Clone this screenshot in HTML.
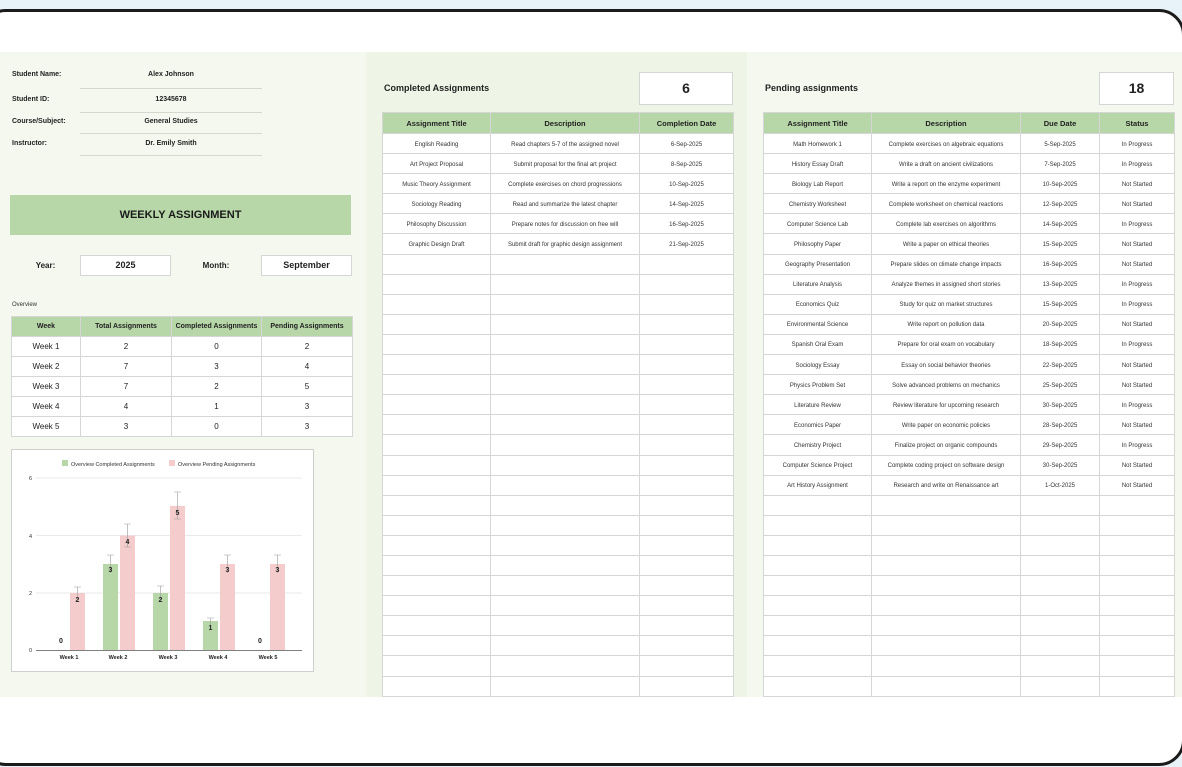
<!DOCTYPE html>
<html><head><meta charset="utf-8"><style>
*{margin:0;padding:0;box-sizing:border-box}
body{width:1182px;height:767px;overflow:hidden;background:#e8f3f9;font-family:"Liberation Sans",Arial,sans-serif;color:#222;position:relative}
.frame{position:absolute;left:-20px;top:9px;width:1205px;height:757px;border:3px solid #1b1b1b;border-radius:26px;background:#fff}
.content{position:absolute;left:0;top:52px;width:1182px;height:645px;background:#f4f8ee}
.mid{position:absolute;left:366px;top:52px;width:381px;height:645px;background:#eef5e6}
.a{position:absolute}
.lbl{font-size:7px;font-weight:bold;color:#222}
.val{font-size:7px;font-weight:bold;text-align:center;width:182px;left:80px}
.ul{position:absolute;left:80px;width:182px;height:1px;background:#d4d8cf}
table{border-collapse:collapse;table-layout:fixed;position:absolute;background:#fff}
td,th{border:1px solid #d6d6d6;text-align:center;overflow:hidden;white-space:nowrap}
th{background:#b7d7a8;font-weight:bold;color:#222}
.t7 td{font-size:6px;color:#333;height:20.1px;padding-top:2px}
.t7 th{font-size:7.5px;height:21px}
.box{position:absolute;background:#fff;border:1px solid #d6d6d6;text-align:center;font-weight:bold}
</style></head><body>
<div class="frame"></div>
<div class="content"></div>
<div class="mid"></div>

<div class="a lbl" style="left:12px;top:71px">Student Name:</div>
<div class="a val" style="top:71px">Alex Johnson</div><div class="ul" style="top:88px"></div>
<div class="a lbl" style="left:12px;top:96px">Student ID:</div>
<div class="a val" style="top:96px">12345678</div><div class="ul" style="top:112px"></div>
<div class="a lbl" style="left:12px;top:118px">Course/Subject:</div>
<div class="a val" style="top:118px">General Studies</div><div class="ul" style="top:133px"></div>
<div class="a lbl" style="left:12px;top:140px">Instructor:</div>
<div class="a val" style="top:140px">Dr. Emily Smith</div><div class="ul" style="top:155px"></div>

<div class="a" style="left:10px;top:195px;width:341px;height:40px;background:#b7d7a8;font-size:11px;font-weight:bold;line-height:40px;text-align:center;color:#1a1a1a">WEEKLY ASSIGNMENT</div>

<div class="a lbl" style="left:11px;top:261px;width:69px;text-align:center;font-size:8px">Year:</div>
<div class="box" style="left:80px;top:255px;width:91px;height:21px;font-size:9px;line-height:19px">2025</div>
<div class="a lbl" style="left:171px;top:261px;width:90px;text-align:center;font-size:8px">Month:</div>
<div class="box" style="left:261px;top:255px;width:91px;height:21px;font-size:9px;line-height:19px">September</div>

<div class="a" style="left:12px;top:302px;font-size:6px;color:#333">Overview</div>
<table style="left:11px;top:316px;width:341px">
<colgroup><col style="width:69px"><col style="width:91px"><col style="width:90px"><col style="width:91px"></colgroup>
<tr><th style="font-size:7px;height:20px">Week</th><th style="font-size:7px">Total Assignments</th><th style="font-size:7px">Completed Assignments</th><th style="font-size:7px">Pending Assignments</th></tr>
<tr><td style="font-size:8px;height:20px">Week 1</td><td style="font-size:8px">2</td><td style="font-size:8px">0</td><td style="font-size:8px">2</td></tr>
<tr><td style="font-size:8px;height:20px">Week 2</td><td style="font-size:8px">7</td><td style="font-size:8px">3</td><td style="font-size:8px">4</td></tr>
<tr><td style="font-size:8px;height:20px">Week 3</td><td style="font-size:8px">7</td><td style="font-size:8px">2</td><td style="font-size:8px">5</td></tr>
<tr><td style="font-size:8px;height:20px">Week 4</td><td style="font-size:8px">4</td><td style="font-size:8px">1</td><td style="font-size:8px">3</td></tr>
<tr><td style="font-size:8px;height:20px">Week 5</td><td style="font-size:8px">3</td><td style="font-size:8px">0</td><td style="font-size:8px">3</td></tr>
</table>

<svg class="a" style="left:11px;top:449px" width="303" height="223" viewBox="0 0 303 223" font-family="Liberation Sans, Arial, sans-serif">
<rect x="0.5" y="0.5" width="302" height="222" fill="#fff" stroke="#cfcfcf"/>
<rect x="51" y="11" width="6" height="6" fill="#b7d7a8"/><text x="60" y="17" font-size="5.5" fill="#333">Overview Completed Assignments</text>
<rect x="158" y="11" width="6" height="6" fill="#f4cccc"/><text x="167" y="17" font-size="5.5" fill="#333">Overview Pending Assignments</text>
<g stroke="#e3e3e3" stroke-width="0.7"><line x1="25" y1="29" x2="291" y2="29"/><line x1="25" y1="86.5" x2="291" y2="86.5"/><line x1="25" y1="144" x2="291" y2="144"/></g>
<g font-size="5.5" fill="#333" text-anchor="end"><text x="21" y="31">6</text><text x="21" y="89">4</text><text x="21" y="146">2</text><text x="21" y="203">0</text></g>
<g fill="#f4cccc"><rect x="59" y="144" width="15" height="57"/><rect x="109" y="86.5" width="15" height="114.5"/><rect x="159" y="57" width="15" height="144"/><rect x="209" y="115" width="15" height="86"/><rect x="259" y="115" width="15" height="86"/></g>
<g fill="#b7d7a8"><rect x="92" y="115" width="15" height="86"/><rect x="142" y="144" width="15" height="57"/><rect x="192" y="172" width="15" height="29"/></g>
<g stroke="#999" stroke-width="0.6" fill="none">
<path d="M66.5 138V150M63 138h7M116.5 75V98M113 75h7M113 98h7M166.5 43V70M163 43h7M163 70h7M216.5 106V124M213 106h7M266.5 106V124M263 106h7M99.5 106V124M96 106h7M149.5 137V150M146 137h7M199.5 169V176M196 169h7"/></g>
<line x1="25" y1="201.5" x2="291" y2="201.5" stroke="#555" stroke-width="0.7"/>
<g font-size="7" font-weight="bold" fill="#222" text-anchor="middle"><text x="50" y="194">0</text><text x="66.5" y="153">2</text><text x="99.5" y="123">3</text><text x="116.5" y="95">4</text><text x="149.5" y="153">2</text><text x="166.5" y="66">5</text><text x="199.5" y="181">1</text><text x="216.5" y="123">3</text><text x="249" y="194">0</text><text x="266.5" y="123">3</text></g>
<g font-size="5.5" font-weight="bold" fill="#222" text-anchor="middle"><text x="58" y="210">Week 1</text><text x="107" y="210">Week 2</text><text x="157" y="210">Week 3</text><text x="207" y="210">Week 4</text><text x="257" y="210">Week 5</text></g>
</svg>

<div class="a" style="left:384px;top:83px;font-size:9px;font-weight:bold">Completed Assignments</div>
<div class="box" style="left:639px;top:72px;width:94px;height:33px;font-size:14px;line-height:31px">6</div>
<table class="t7" style="left:382px;top:112px;width:351px">
<colgroup><col style="width:108px"><col style="width:149px"><col style="width:94px"></colgroup>
<tr><th>Assignment Title</th><th>Description</th><th>Completion Date</th></tr>
<tr><td>English Reading</td><td>Read chapters 5-7 of the assigned novel</td><td>6-Sep-2025</td></tr>
<tr><td>Art Project Proposal</td><td>Submit proposal for the final art project</td><td>8-Sep-2025</td></tr>
<tr><td>Music Theory Assignment</td><td>Complete exercises on chord progressions</td><td>10-Sep-2025</td></tr>
<tr><td>Sociology Reading</td><td>Read and summarize the latest chapter</td><td>14-Sep-2025</td></tr>
<tr><td>Philosophy Discussion</td><td>Prepare notes for discussion on free will</td><td>16-Sep-2025</td></tr>
<tr><td>Graphic Design Draft</td><td>Submit draft for graphic design assignment</td><td>21-Sep-2025</td></tr>
<tr><td></td><td></td><td></td></tr><tr><td></td><td></td><td></td></tr><tr><td></td><td></td><td></td></tr><tr><td></td><td></td><td></td></tr><tr><td></td><td></td><td></td></tr><tr><td></td><td></td><td></td></tr><tr><td></td><td></td><td></td></tr><tr><td></td><td></td><td></td></tr><tr><td></td><td></td><td></td></tr><tr><td></td><td></td><td></td></tr><tr><td></td><td></td><td></td></tr><tr><td></td><td></td><td></td></tr><tr><td></td><td></td><td></td></tr><tr><td></td><td></td><td></td></tr><tr><td></td><td></td><td></td></tr><tr><td></td><td></td><td></td></tr><tr><td></td><td></td><td></td></tr><tr><td></td><td></td><td></td></tr><tr><td></td><td></td><td></td></tr><tr><td></td><td></td><td></td></tr><tr><td></td><td></td><td></td></tr><tr><td></td><td></td><td></td></tr>
</table>

<div class="a" style="left:765px;top:83px;font-size:9px;font-weight:bold">Pending assignments</div>
<div class="box" style="left:1099px;top:72px;width:75px;height:33px;font-size:14px;line-height:31px">18</div>
<table class="t7" style="left:763px;top:112px;width:411px">
<colgroup><col style="width:108px"><col style="width:149px"><col style="width:79px"><col style="width:75px"></colgroup>
<tr><th>Assignment Title</th><th>Description</th><th>Due Date</th><th>Status</th></tr>
<tr><td>Math Homework 1</td><td>Complete exercises on algebraic equations</td><td>5-Sep-2025</td><td>In Progress</td></tr>
<tr><td>History Essay Draft</td><td>Write a draft on ancient civilizations</td><td>7-Sep-2025</td><td>In Progress</td></tr>
<tr><td>Biology Lab Report</td><td>Write a report on the enzyme experiment</td><td>10-Sep-2025</td><td>Not Started</td></tr>
<tr><td>Chemistry Worksheet</td><td>Complete worksheet on chemical reactions</td><td>12-Sep-2025</td><td>Not Started</td></tr>
<tr><td>Computer Science Lab</td><td>Complete lab exercises on algorithms</td><td>14-Sep-2025</td><td>In Progress</td></tr>
<tr><td>Philosophy Paper</td><td>Write a paper on ethical theories</td><td>15-Sep-2025</td><td>Not Started</td></tr>
<tr><td>Geography Presentation</td><td>Prepare slides on climate change impacts</td><td>16-Sep-2025</td><td>Not Started</td></tr>
<tr><td>Literature Analysis</td><td>Analyze themes in assigned short stories</td><td>13-Sep-2025</td><td>In Progress</td></tr>
<tr><td>Economics Quiz</td><td>Study for quiz on market structures</td><td>15-Sep-2025</td><td>In Progress</td></tr>
<tr><td>Environmental Science</td><td>Write report on pollution data</td><td>20-Sep-2025</td><td>Not Started</td></tr>
<tr><td>Spanish Oral Exam</td><td>Prepare for oral exam on vocabulary</td><td>18-Sep-2025</td><td>In Progress</td></tr>
<tr><td>Sociology Essay</td><td>Essay on social behavior theories</td><td>22-Sep-2025</td><td>Not Started</td></tr>
<tr><td>Physics Problem Set</td><td>Solve advanced problems on mechanics</td><td>25-Sep-2025</td><td>Not Started</td></tr>
<tr><td>Literature Review</td><td>Review literature for upcoming research</td><td>30-Sep-2025</td><td>In Progress</td></tr>
<tr><td>Economics Paper</td><td>Write paper on economic policies</td><td>28-Sep-2025</td><td>Not Started</td></tr>
<tr><td>Chemistry Project</td><td>Finalize project on organic compounds</td><td>29-Sep-2025</td><td>In Progress</td></tr>
<tr><td>Computer Science Project</td><td>Complete coding project on software design</td><td>30-Sep-2025</td><td>Not Started</td></tr>
<tr><td>Art History Assignment</td><td>Research and write on Renaissance art</td><td>1-Oct-2025</td><td>Not Started</td></tr>
<tr><td></td><td></td><td></td><td></td></tr><tr><td></td><td></td><td></td><td></td></tr><tr><td></td><td></td><td></td><td></td></tr><tr><td></td><td></td><td></td><td></td></tr><tr><td></td><td></td><td></td><td></td></tr><tr><td></td><td></td><td></td><td></td></tr><tr><td></td><td></td><td></td><td></td></tr><tr><td></td><td></td><td></td><td></td></tr><tr><td></td><td></td><td></td><td></td></tr><tr><td></td><td></td><td></td><td></td></tr>
</table>
</body></html>
